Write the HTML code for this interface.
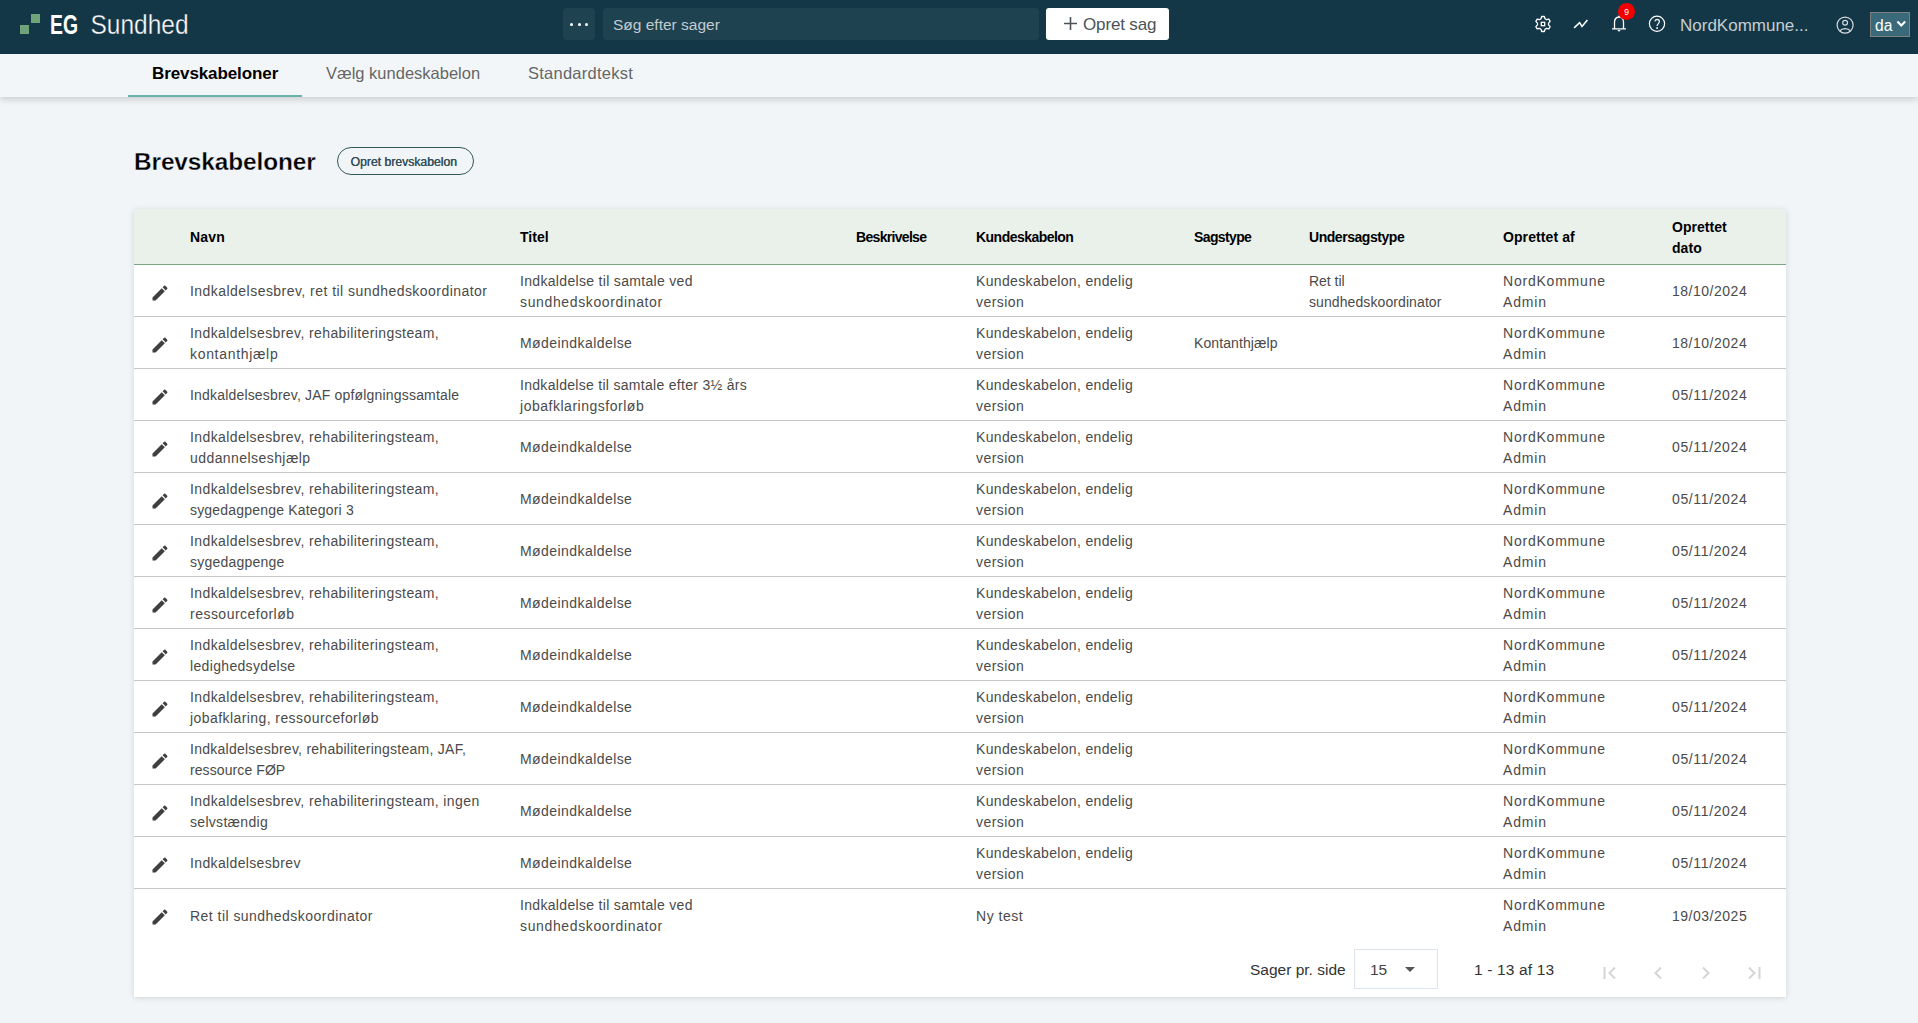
<!DOCTYPE html>
<html lang="da">
<head>
<meta charset="utf-8">
<title>Brevskabeloner - EG Sundhed</title>
<style>
*{box-sizing:border-box;margin:0;padding:0}
html,body{width:1918px;height:1023px;overflow:hidden}
body{background:#f2f5f8;font-family:"Liberation Sans",sans-serif;position:relative;color:#4a4a4a}
.abs{position:absolute}
/* top bar */
#top{position:absolute;left:0;top:0;width:1918px;height:54px;background:#143747}
#logo1{position:absolute;left:20px;top:25px;width:9px;height:9px;background:#6fa47b}
#logo2{position:absolute;left:31px;top:14px;width:9px;height:9px;background:#6fa47b}
#logotext{position:absolute;left:48px;top:8px}
#dots{position:absolute;left:563px;top:8px;width:32px;height:32px;border-radius:4px;background:#1f4251}
#dots i{position:absolute;top:14.5px;width:3px;height:3px;border-radius:50%;background:#fff}
#search{position:absolute;left:603px;top:8px;width:436px;height:32px;border-radius:4px;background:#1f4251}
#search span{position:absolute;left:10px;top:7px;font-size:15.5px;line-height:20px;color:#c3cbcf;white-space:nowrap}
#opret{position:absolute;left:1046px;top:8px;width:123px;height:32px;border-radius:3px;background:#fff}
#opret span{position:absolute;left:37px;top:7px;font-size:17px;line-height:20px;color:#4b5358;white-space:nowrap;letter-spacing:-0.15px}
#opret svg{position:absolute;left:17px;top:8px}
.ti{position:absolute}
#org{position:absolute;left:1680px;top:16px;font-size:17px;line-height:20px;color:#c6cdd1;white-space:nowrap}
#lang{position:absolute;left:1870px;top:12px;width:40px;height:25px;background:#3a6a7a;border:1px solid #7d7f80}
#lang span{position:absolute;left:4px;top:2.5px;font-size:15.6px;line-height:20px;color:#fff}
#badge{position:absolute;left:1618px;top:2.5px;width:17px;height:17px;border-radius:50%;background:#f20000;color:#fff;font-size:8.5px;line-height:19px;text-align:center}
/* tabs */
#tabs{position:absolute;left:0;top:54px;width:1918px;height:43px;background:#f3f6f9;box-shadow:0 3px 6px rgba(0,0,0,0.15)}
.tab{position:absolute;top:9px;font-size:16.5px;line-height:20px;color:#666;white-space:nowrap}
#tab1{left:152px;font-weight:bold;color:#000;font-size:17px;top:10px;letter-spacing:-0.1px}
#tabline{position:absolute;left:128px;top:41px;width:174px;height:2px;background:#6ab2ae}
/* page title */
#ptitle{position:absolute;left:134px;top:146.5px;font-size:24.4px;line-height:30px;font-weight:bold;color:#000;white-space:nowrap;letter-spacing:-0.1px;-webkit-text-stroke:0.3px #f2f5f8}
#pbtn{position:absolute;left:337px;top:147px;width:137px;height:28px;border:1px solid #2f5a55;border-radius:15px}
#pbtn span{position:absolute;left:12.5px;top:6.5px;font-size:12.2px;line-height:15px;color:#34505b;text-shadow:0.35px 0 0 #34505b;white-space:nowrap}
/* card */
#card{position:absolute;left:134px;top:209px;width:1652px;height:788px;background:#fff;box-shadow:0 1px 6px rgba(0,0,0,0.13)}
#thead{position:absolute;left:0;top:0;width:1652px;height:56px;background:#eaf0ea;border-bottom:1px solid #79a77f}
.h{position:absolute;top:7px;height:42px;display:flex;align-items:center;font-size:14px;line-height:21px;font-weight:bold;color:#000;white-space:nowrap}
.row{position:absolute;left:0;width:1652px;height:52px;border-bottom:1px solid #c7c7c7}
.row.last{border-bottom:none}
.c{position:absolute;top:1px;height:51px;display:flex;align-items:center;font-size:14px;line-height:21px;color:#4a4a4a;white-space:nowrap;letter-spacing:0.3px}
.pc{position:absolute;left:16px;top:18px;width:20px;height:20px}
.pen{display:block}
.L{display:block}
/* pagination */
#ppl{position:absolute;left:1250px;top:960px;font-size:15.5px;line-height:20px;color:#333;white-space:nowrap}
#sel{position:absolute;left:1354px;top:949px;width:84px;height:40px;border:1px solid #dde3ea;background:#fff}
#sel span{position:absolute;left:15px;top:10px;font-size:15.5px;line-height:20px;color:#444}
#sel i{position:absolute;left:50px;top:17px;width:0;height:0;border-left:5px solid transparent;border-right:5px solid transparent;border-top:5px solid #555}
#range{position:absolute;left:1474px;top:960px;letter-spacing:0.15px;font-size:15.5px;line-height:20px;color:#333;white-space:nowrap}
</style>
</head>
<body>
<div id="top">
  <div id="logo1"></div><div id="logo2"></div>
  <svg id="logotext" width="145" height="36" viewBox="0 0 145 36">
    <text x="2" y="25.5" font-family="Liberation Sans" font-weight="bold" font-size="27" fill="#fff" textLength="28" lengthAdjust="spacingAndGlyphs">EG</text>
    <text x="42.5" y="25.5" font-family="Liberation Sans" font-size="27" fill="#fff" stroke="#143747" stroke-width="0.35" textLength="98" lengthAdjust="spacingAndGlyphs">Sundhed</text>
  </svg>
  <div id="dots"><i style="left:7px"></i><i style="left:14.5px"></i><i style="left:21.8px"></i></div>
  <div id="search"><span>Søg efter sager</span></div>
  <div id="opret">
    <svg width="15" height="15" viewBox="0 0 15 15"><path d="M7.5 1v13M1 7.5h13" stroke="#4b5358" stroke-width="1.6"/></svg>
    <span>Opret sag</span>
  </div>
  <!-- gear -->
  <svg class="ti" style="left:1531px;top:12px" width="24" height="24" viewBox="0 0 24 24"><path fill="none" stroke="#fff" stroke-width="1.3" stroke-linejoin="round" d="M9.99 6.77 L10.68 4.52 L13.32 4.52 L14.01 6.77 L15.52 7.65 L17.82 7.11 L19.14 9.40 L17.53 11.12 L17.53 12.88 L19.14 14.60 L17.82 16.89 L15.52 16.35 L14.01 17.23 L13.32 19.48 L10.68 19.48 L9.99 17.23 L8.48 16.35 L6.18 16.89 L4.86 14.60 L6.47 12.88 L6.47 11.12 L4.86 9.40 L6.18 7.11 L8.48 7.65Z"/><rect x="10.3" y="10.3" width="3.4" height="3.4" fill="none" stroke="#fff" stroke-width="1.3"/></svg>
  <!-- trend -->
  <svg class="ti" style="left:1570px;top:16px" width="20" height="14" viewBox="0 0 20 14"><path d="M4.1 11.9L9.6 6.6 12 10.4 17.4 3.9" fill="none" stroke="#fff" stroke-width="1.5"/></svg>
  <!-- bell -->
  <svg class="ti" style="left:1609px;top:13px" width="20" height="21" viewBox="0 0 20 21"><path d="M5.5 15.8V9.3C5.5 6.2 7.4 4.2 10 4.2s4.5 2 4.5 5.1v6.5M3 15.8h14" fill="none" stroke="#fff" stroke-width="1.3"/><path d="M8.3 17h3.4L10 18.8z" fill="#fff"/><circle cx="10" cy="3.4" r="1" fill="#fff"/></svg>
  <div id="badge">9</div>
  <!-- help -->
  <svg class="ti" style="left:1647px;top:14px" width="20" height="20" viewBox="0 0 20 20"><circle cx="10" cy="9.8" r="7.6" fill="none" stroke="#fff" stroke-width="1.2"/><path d="M7.9 7.3c.3-1.1 1.2-1.8 2.2-1.8 1.3 0 2.3.9 2.3 2.1 0 1.7-2.3 2.4-2.3 4.3" fill="none" stroke="#e8ecee" stroke-width="1.3"/><rect x="9.2" y="13.2" width="1.8" height="1.8" fill="#d0d6d9"/></svg>
  <div id="org">NordKommune...</div>
  <!-- user -->
  <svg class="ti" style="left:1835px;top:15px" width="20" height="20" viewBox="0 0 20 20"><circle cx="10.1" cy="10.1" r="8" fill="none" stroke="#d6dcdf" stroke-width="1.2"/><circle cx="10.1" cy="7.8" r="2.4" fill="none" stroke="#d6dcdf" stroke-width="1.2"/><path d="M4.6 16.2c1.2-1.6 3.2-2.5 5.5-2.5s4.3.9 5.5 2.5" fill="none" stroke="#d6dcdf" stroke-width="1.2"/></svg>
  <div id="lang"><span>da</span>
    <svg style="position:absolute;left:24.5px;top:7px" width="11" height="8" viewBox="0 0 11 8"><path d="M1.4 1.6L5.3 5.5 9.2 1.6" fill="none" stroke="#fff" stroke-width="2.1"/></svg>
  </div>
</div>

<div id="tabs">
  <div class="tab" id="tab1">Brevskabeloner</div>
  <div class="tab" style="left:326px">Vælg kundeskabelon</div>
  <div class="tab" style="left:528px;letter-spacing:0.25px">Standardtekst</div>
  <div id="tabline"></div>
</div>

<div id="ptitle">Brevskabeloner</div>
<div id="pbtn"><span>Opret brevskabelon</span></div>

<div id="card">
  <div id="thead"><div class="h" style="left:56px"><div><span class="L" style="letter-spacing:0.155px">Navn</span></div></div><div class="h" style="left:386px"><div><span class="L" style="letter-spacing:0.042px">Titel</span></div></div><div class="h" style="left:722px"><div><span class="L" style="letter-spacing:-0.684px">Beskrivelse</span></div></div><div class="h" style="left:842px"><div><span class="L" style="letter-spacing:-0.529px">Kundeskabelon</span></div></div><div class="h" style="left:1060px"><div><span class="L" style="letter-spacing:-0.621px">Sagstype</span></div></div><div class="h" style="left:1175px"><div><span class="L" style="letter-spacing:-0.455px">Undersagstype</span></div></div><div class="h" style="left:1369px"><div><span class="L" style="letter-spacing:0.090px">Oprettet af</span></div></div><div class="h" style="left:1538px;top:8px"><div><span class="L" style="letter-spacing:0.035px">Oprettet</span><span class="L" style="letter-spacing:0.046px">dato</span></div></div></div>
<div class="row" style="top:56px"><div class="pc"><svg class="pen" width="20" height="20" viewBox="0 0 24 24"><path d="M3 17.25V21h3.75L17.81 9.94l-3.75-3.75L3 17.25zM20.71 7.04c.39-.39.39-1.02 0-1.41l-2.34-2.34c-.39-.39-1.02-.39-1.41 0l-1.83 1.83 3.75 3.75 1.83-1.83z" fill="#404040"/></svg></div><div class="c" style="left:56px"><div><span class="L" style="letter-spacing:0.459px">Indkaldelsesbrev, ret til sundhedskoordinator</span></div></div><div class="c" style="left:386px"><div><span class="L" style="letter-spacing:0.319px">Indkaldelse til samtale ved</span><span class="L" style="letter-spacing:0.635px">sundhedskoordinator</span></div></div><div class="c" style="left:842px"><div><span class="L" style="letter-spacing:0.344px">Kundeskabelon, endelig</span><span class="L" style="letter-spacing:0.443px">version</span></div></div><div class="c" style="left:1175px"><div><span class="L" style="letter-spacing:-0.033px">Ret til</span><span class="L" style="letter-spacing:0.091px">sundhedskoordinator</span></div></div><div class="c" style="left:1369px"><div><span class="L" style="letter-spacing:0.784px">NordKommune</span><span class="L" style="letter-spacing:0.828px">Admin</span></div></div><div class="c" style="left:1538px"><div><span class="L" style="letter-spacing:0.514px">18/10/2024</span></div></div></div>
<div class="row" style="top:108px"><div class="pc"><svg class="pen" width="20" height="20" viewBox="0 0 24 24"><path d="M3 17.25V21h3.75L17.81 9.94l-3.75-3.75L3 17.25zM20.71 7.04c.39-.39.39-1.02 0-1.41l-2.34-2.34c-.39-.39-1.02-.39-1.41 0l-1.83 1.83 3.75 3.75 1.83-1.83z" fill="#404040"/></svg></div><div class="c" style="left:56px"><div><span class="L" style="letter-spacing:0.398px">Indkaldelsesbrev, rehabiliteringsteam,</span><span class="L" style="letter-spacing:0.684px">kontanthjælp</span></div></div><div class="c" style="left:386px"><div><span class="L" style="letter-spacing:0.433px">Mødeindkaldelse</span></div></div><div class="c" style="left:842px"><div><span class="L" style="letter-spacing:0.344px">Kundeskabelon, endelig</span><span class="L" style="letter-spacing:0.443px">version</span></div></div><div class="c" style="left:1060px"><div><span class="L" style="letter-spacing:0.089px">Kontanthjælp</span></div></div><div class="c" style="left:1369px"><div><span class="L" style="letter-spacing:0.784px">NordKommune</span><span class="L" style="letter-spacing:0.828px">Admin</span></div></div><div class="c" style="left:1538px"><div><span class="L" style="letter-spacing:0.514px">18/10/2024</span></div></div></div>
<div class="row" style="top:160px"><div class="pc"><svg class="pen" width="20" height="20" viewBox="0 0 24 24"><path d="M3 17.25V21h3.75L17.81 9.94l-3.75-3.75L3 17.25zM20.71 7.04c.39-.39.39-1.02 0-1.41l-2.34-2.34c-.39-.39-1.02-.39-1.41 0l-1.83 1.83 3.75 3.75 1.83-1.83z" fill="#404040"/></svg></div><div class="c" style="left:56px"><div><span class="L" style="letter-spacing:0.182px">Indkaldelsesbrev, JAF opfølgningssamtale</span></div></div><div class="c" style="left:386px"><div><span class="L" style="letter-spacing:0.296px">Indkaldelse til samtale efter 3½ års</span><span class="L" style="letter-spacing:0.517px">jobafklaringsforløb</span></div></div><div class="c" style="left:842px"><div><span class="L" style="letter-spacing:0.344px">Kundeskabelon, endelig</span><span class="L" style="letter-spacing:0.443px">version</span></div></div><div class="c" style="left:1369px"><div><span class="L" style="letter-spacing:0.784px">NordKommune</span><span class="L" style="letter-spacing:0.828px">Admin</span></div></div><div class="c" style="left:1538px"><div><span class="L" style="letter-spacing:0.630px">05/11/2024</span></div></div></div>
<div class="row" style="top:212px"><div class="pc"><svg class="pen" width="20" height="20" viewBox="0 0 24 24"><path d="M3 17.25V21h3.75L17.81 9.94l-3.75-3.75L3 17.25zM20.71 7.04c.39-.39.39-1.02 0-1.41l-2.34-2.34c-.39-.39-1.02-.39-1.41 0l-1.83 1.83 3.75 3.75 1.83-1.83z" fill="#404040"/></svg></div><div class="c" style="left:56px"><div><span class="L" style="letter-spacing:0.398px">Indkaldelsesbrev, rehabiliteringsteam,</span><span class="L" style="letter-spacing:0.431px">uddannelseshjælp</span></div></div><div class="c" style="left:386px"><div><span class="L" style="letter-spacing:0.433px">Mødeindkaldelse</span></div></div><div class="c" style="left:842px"><div><span class="L" style="letter-spacing:0.344px">Kundeskabelon, endelig</span><span class="L" style="letter-spacing:0.443px">version</span></div></div><div class="c" style="left:1369px"><div><span class="L" style="letter-spacing:0.784px">NordKommune</span><span class="L" style="letter-spacing:0.828px">Admin</span></div></div><div class="c" style="left:1538px"><div><span class="L" style="letter-spacing:0.630px">05/11/2024</span></div></div></div>
<div class="row" style="top:264px"><div class="pc"><svg class="pen" width="20" height="20" viewBox="0 0 24 24"><path d="M3 17.25V21h3.75L17.81 9.94l-3.75-3.75L3 17.25zM20.71 7.04c.39-.39.39-1.02 0-1.41l-2.34-2.34c-.39-.39-1.02-.39-1.41 0l-1.83 1.83 3.75 3.75 1.83-1.83z" fill="#404040"/></svg></div><div class="c" style="left:56px"><div><span class="L" style="letter-spacing:0.398px">Indkaldelsesbrev, rehabiliteringsteam,</span><span class="L" style="letter-spacing:0.187px">sygedagpenge Kategori 3</span></div></div><div class="c" style="left:386px"><div><span class="L" style="letter-spacing:0.433px">Mødeindkaldelse</span></div></div><div class="c" style="left:842px"><div><span class="L" style="letter-spacing:0.344px">Kundeskabelon, endelig</span><span class="L" style="letter-spacing:0.443px">version</span></div></div><div class="c" style="left:1369px"><div><span class="L" style="letter-spacing:0.784px">NordKommune</span><span class="L" style="letter-spacing:0.828px">Admin</span></div></div><div class="c" style="left:1538px"><div><span class="L" style="letter-spacing:0.630px">05/11/2024</span></div></div></div>
<div class="row" style="top:316px"><div class="pc"><svg class="pen" width="20" height="20" viewBox="0 0 24 24"><path d="M3 17.25V21h3.75L17.81 9.94l-3.75-3.75L3 17.25zM20.71 7.04c.39-.39.39-1.02 0-1.41l-2.34-2.34c-.39-.39-1.02-.39-1.41 0l-1.83 1.83 3.75 3.75 1.83-1.83z" fill="#404040"/></svg></div><div class="c" style="left:56px"><div><span class="L" style="letter-spacing:0.398px">Indkaldelsesbrev, rehabiliteringsteam,</span><span class="L" style="letter-spacing:0.211px">sygedagpenge</span></div></div><div class="c" style="left:386px"><div><span class="L" style="letter-spacing:0.433px">Mødeindkaldelse</span></div></div><div class="c" style="left:842px"><div><span class="L" style="letter-spacing:0.344px">Kundeskabelon, endelig</span><span class="L" style="letter-spacing:0.443px">version</span></div></div><div class="c" style="left:1369px"><div><span class="L" style="letter-spacing:0.784px">NordKommune</span><span class="L" style="letter-spacing:0.828px">Admin</span></div></div><div class="c" style="left:1538px"><div><span class="L" style="letter-spacing:0.630px">05/11/2024</span></div></div></div>
<div class="row" style="top:368px"><div class="pc"><svg class="pen" width="20" height="20" viewBox="0 0 24 24"><path d="M3 17.25V21h3.75L17.81 9.94l-3.75-3.75L3 17.25zM20.71 7.04c.39-.39.39-1.02 0-1.41l-2.34-2.34c-.39-.39-1.02-.39-1.41 0l-1.83 1.83 3.75 3.75 1.83-1.83z" fill="#404040"/></svg></div><div class="c" style="left:56px"><div><span class="L" style="letter-spacing:0.398px">Indkaldelsesbrev, rehabiliteringsteam,</span><span class="L" style="letter-spacing:0.481px">ressourceforløb</span></div></div><div class="c" style="left:386px"><div><span class="L" style="letter-spacing:0.433px">Mødeindkaldelse</span></div></div><div class="c" style="left:842px"><div><span class="L" style="letter-spacing:0.344px">Kundeskabelon, endelig</span><span class="L" style="letter-spacing:0.443px">version</span></div></div><div class="c" style="left:1369px"><div><span class="L" style="letter-spacing:0.784px">NordKommune</span><span class="L" style="letter-spacing:0.828px">Admin</span></div></div><div class="c" style="left:1538px"><div><span class="L" style="letter-spacing:0.630px">05/11/2024</span></div></div></div>
<div class="row" style="top:420px"><div class="pc"><svg class="pen" width="20" height="20" viewBox="0 0 24 24"><path d="M3 17.25V21h3.75L17.81 9.94l-3.75-3.75L3 17.25zM20.71 7.04c.39-.39.39-1.02 0-1.41l-2.34-2.34c-.39-.39-1.02-.39-1.41 0l-1.83 1.83 3.75 3.75 1.83-1.83z" fill="#404040"/></svg></div><div class="c" style="left:56px"><div><span class="L" style="letter-spacing:0.398px">Indkaldelsesbrev, rehabiliteringsteam,</span><span class="L" style="letter-spacing:0.335px">ledighedsydelse</span></div></div><div class="c" style="left:386px"><div><span class="L" style="letter-spacing:0.433px">Mødeindkaldelse</span></div></div><div class="c" style="left:842px"><div><span class="L" style="letter-spacing:0.344px">Kundeskabelon, endelig</span><span class="L" style="letter-spacing:0.443px">version</span></div></div><div class="c" style="left:1369px"><div><span class="L" style="letter-spacing:0.784px">NordKommune</span><span class="L" style="letter-spacing:0.828px">Admin</span></div></div><div class="c" style="left:1538px"><div><span class="L" style="letter-spacing:0.630px">05/11/2024</span></div></div></div>
<div class="row" style="top:472px"><div class="pc"><svg class="pen" width="20" height="20" viewBox="0 0 24 24"><path d="M3 17.25V21h3.75L17.81 9.94l-3.75-3.75L3 17.25zM20.71 7.04c.39-.39.39-1.02 0-1.41l-2.34-2.34c-.39-.39-1.02-.39-1.41 0l-1.83 1.83 3.75 3.75 1.83-1.83z" fill="#404040"/></svg></div><div class="c" style="left:56px"><div><span class="L" style="letter-spacing:0.398px">Indkaldelsesbrev, rehabiliteringsteam,</span><span class="L" style="letter-spacing:0.424px">jobafklaring, ressourceforløb</span></div></div><div class="c" style="left:386px"><div><span class="L" style="letter-spacing:0.433px">Mødeindkaldelse</span></div></div><div class="c" style="left:842px"><div><span class="L" style="letter-spacing:0.344px">Kundeskabelon, endelig</span><span class="L" style="letter-spacing:0.443px">version</span></div></div><div class="c" style="left:1369px"><div><span class="L" style="letter-spacing:0.784px">NordKommune</span><span class="L" style="letter-spacing:0.828px">Admin</span></div></div><div class="c" style="left:1538px"><div><span class="L" style="letter-spacing:0.630px">05/11/2024</span></div></div></div>
<div class="row" style="top:524px"><div class="pc"><svg class="pen" width="20" height="20" viewBox="0 0 24 24"><path d="M3 17.25V21h3.75L17.81 9.94l-3.75-3.75L3 17.25zM20.71 7.04c.39-.39.39-1.02 0-1.41l-2.34-2.34c-.39-.39-1.02-.39-1.41 0l-1.83 1.83 3.75 3.75 1.83-1.83z" fill="#404040"/></svg></div><div class="c" style="left:56px"><div><span class="L" style="letter-spacing:0.255px">Indkaldelsesbrev, rehabiliteringsteam, JAF,</span><span class="L" style="letter-spacing:0.088px">ressource FØP</span></div></div><div class="c" style="left:386px"><div><span class="L" style="letter-spacing:0.433px">Mødeindkaldelse</span></div></div><div class="c" style="left:842px"><div><span class="L" style="letter-spacing:0.344px">Kundeskabelon, endelig</span><span class="L" style="letter-spacing:0.443px">version</span></div></div><div class="c" style="left:1369px"><div><span class="L" style="letter-spacing:0.784px">NordKommune</span><span class="L" style="letter-spacing:0.828px">Admin</span></div></div><div class="c" style="left:1538px"><div><span class="L" style="letter-spacing:0.630px">05/11/2024</span></div></div></div>
<div class="row" style="top:576px"><div class="pc"><svg class="pen" width="20" height="20" viewBox="0 0 24 24"><path d="M3 17.25V21h3.75L17.81 9.94l-3.75-3.75L3 17.25zM20.71 7.04c.39-.39.39-1.02 0-1.41l-2.34-2.34c-.39-.39-1.02-.39-1.41 0l-1.83 1.83 3.75 3.75 1.83-1.83z" fill="#404040"/></svg></div><div class="c" style="left:56px"><div><span class="L" style="letter-spacing:0.397px">Indkaldelsesbrev, rehabiliteringsteam, ingen</span><span class="L" style="letter-spacing:0.300px">selvstændig</span></div></div><div class="c" style="left:386px"><div><span class="L" style="letter-spacing:0.433px">Mødeindkaldelse</span></div></div><div class="c" style="left:842px"><div><span class="L" style="letter-spacing:0.344px">Kundeskabelon, endelig</span><span class="L" style="letter-spacing:0.443px">version</span></div></div><div class="c" style="left:1369px"><div><span class="L" style="letter-spacing:0.784px">NordKommune</span><span class="L" style="letter-spacing:0.828px">Admin</span></div></div><div class="c" style="left:1538px"><div><span class="L" style="letter-spacing:0.630px">05/11/2024</span></div></div></div>
<div class="row" style="top:628px"><div class="pc"><svg class="pen" width="20" height="20" viewBox="0 0 24 24"><path d="M3 17.25V21h3.75L17.81 9.94l-3.75-3.75L3 17.25zM20.71 7.04c.39-.39.39-1.02 0-1.41l-2.34-2.34c-.39-.39-1.02-.39-1.41 0l-1.83 1.83 3.75 3.75 1.83-1.83z" fill="#404040"/></svg></div><div class="c" style="left:56px"><div><span class="L" style="letter-spacing:0.356px">Indkaldelsesbrev</span></div></div><div class="c" style="left:386px"><div><span class="L" style="letter-spacing:0.433px">Mødeindkaldelse</span></div></div><div class="c" style="left:842px"><div><span class="L" style="letter-spacing:0.344px">Kundeskabelon, endelig</span><span class="L" style="letter-spacing:0.443px">version</span></div></div><div class="c" style="left:1369px"><div><span class="L" style="letter-spacing:0.784px">NordKommune</span><span class="L" style="letter-spacing:0.828px">Admin</span></div></div><div class="c" style="left:1538px"><div><span class="L" style="letter-spacing:0.630px">05/11/2024</span></div></div></div>
<div class="row last" style="top:680px"><div class="pc"><svg class="pen" width="20" height="20" viewBox="0 0 24 24"><path d="M3 17.25V21h3.75L17.81 9.94l-3.75-3.75L3 17.25zM20.71 7.04c.39-.39.39-1.02 0-1.41l-2.34-2.34c-.39-.39-1.02-.39-1.41 0l-1.83 1.83 3.75 3.75 1.83-1.83z" fill="#404040"/></svg></div><div class="c" style="left:56px;top:2px"><div><span class="L" style="letter-spacing:0.464px">Ret til sundhedskoordinator</span></div></div><div class="c" style="left:386px"><div><span class="L" style="letter-spacing:0.319px">Indkaldelse til samtale ved</span><span class="L" style="letter-spacing:0.635px">sundhedskoordinator</span></div></div><div class="c" style="left:842px;top:2px"><div><span class="L" style="letter-spacing:0.520px">Ny test</span></div></div><div class="c" style="left:1369px"><div><span class="L" style="letter-spacing:0.784px">NordKommune</span><span class="L" style="letter-spacing:0.828px">Admin</span></div></div><div class="c" style="left:1538px;top:2px"><div><span class="L" style="letter-spacing:0.514px">19/03/2025</span></div></div></div>
</div>

<div id="ppl">Sager pr. side</div>
<div id="sel"><span>15</span><i></i></div>
<div id="range">1 - 13 af 13</div>
<!-- pager icons -->
<svg class="ti" style="left:1600px;top:963px" width="20" height="20" viewBox="0 0 20 20"><path d="M4.5 4v12" stroke="#d5d5d5" stroke-width="2"/><path d="M15 4.5L9.5 10 15 15.5" fill="none" stroke="#d5d5d5" stroke-width="2"/></svg>
<svg class="ti" style="left:1648px;top:963px" width="20" height="20" viewBox="0 0 20 20"><path d="M13 4.5L7.5 10 13 15.5" fill="none" stroke="#d5d5d5" stroke-width="2"/></svg>
<svg class="ti" style="left:1696px;top:963px" width="20" height="20" viewBox="0 0 20 20"><path d="M7 4.5L12.5 10 7 15.5" fill="none" stroke="#d5d5d5" stroke-width="2"/></svg>
<svg class="ti" style="left:1744px;top:963px" width="20" height="20" viewBox="0 0 20 20"><path d="M5 4.5L10.5 10 5 15.5" fill="none" stroke="#d5d5d5" stroke-width="2"/><path d="M15.5 4v12" stroke="#d5d5d5" stroke-width="2"/></svg>
</body>
</html>
